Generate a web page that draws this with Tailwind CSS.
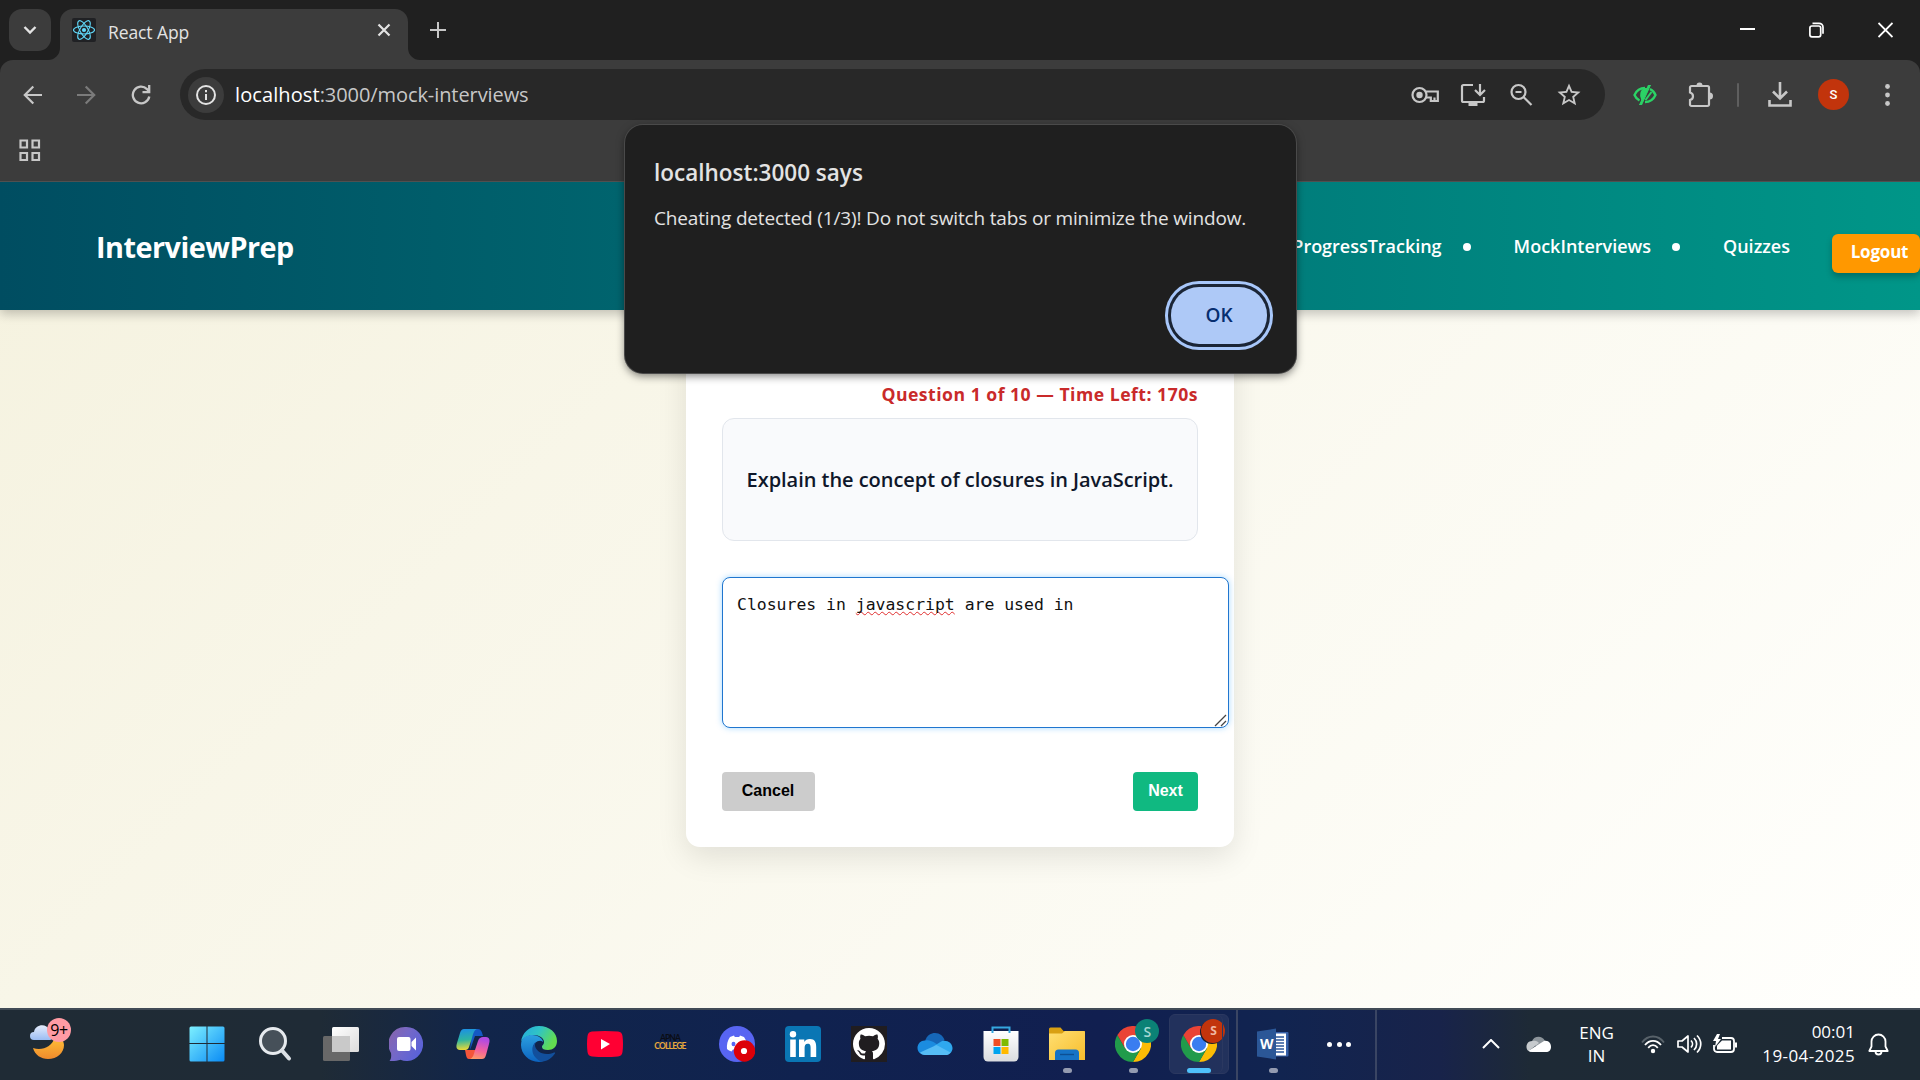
<!DOCTYPE html>
<html lang="en">
<head>
<meta charset="utf-8">
<title>React App</title>
<script src="https://cdn.jsdelivr.net/npm/@tailwindcss/browser@4"></script>
</head>
<body class="relative flex h-[1080px] w-[1920px] flex-col overflow-hidden bg-[#202020] font-['Open_Sans',sans-serif]">

<!-- Tab strip -->
<div class="flex h-[60px] shrink-0 items-end pl-[9px]">
  <button class="mb-[9px] flex h-[42px] w-[42px] items-center justify-center rounded-[13px] bg-[#3c3c3c]">
    <svg width="14" height="10" viewBox="0 0 14 10" fill="none" stroke="#e3e3e3" stroke-width="2.4"><path d="M1.5 2l5.500 5.500L12.500 2"/></svg>
  </button>
  <svg class="ml-[-3px]" width="12" height="12" viewBox="0 0 12 12"><path d="M12 0v12H0A12 12 0 0 0 12 0z" fill="#3c3c3c"/></svg>
  <div class="flex h-[51px] w-[348px] items-center rounded-t-[13px] bg-[#3c3c3c] pr-[17px] pb-[9px] pl-3">
    <svg width="24" height="24" viewBox="0 0 24 24" fill="none" stroke="#61dafb" stroke-width="1.100"><rect width="24" height="24" rx="2" fill="#202124" stroke="none"/><circle cx="12" cy="12" r="2.100" fill="#61dafb" stroke="none"/><ellipse cx="12" cy="12" rx="10.500" ry="4"/><ellipse cx="12" cy="12" rx="10.500" ry="4" transform="rotate(60 12 12)"/><ellipse cx="12" cy="12" rx="10.500" ry="4" transform="rotate(120 12 12)"/></svg>
    <span class="mt-[3px] ml-3 text-[17.5px] leading-6 tracking-[-0.1px] text-[#e3e3e3]">React App</span>
    <svg class="ml-auto" width="14" height="14" viewBox="0 0 14 14" stroke="#e3e3e3" stroke-width="2.200"><path d="M1.500 1.500l11 11M12.500 1.500l-11 11"/></svg>
  </div>
  <svg width="12" height="12" viewBox="0 0 12 12"><path d="M0 0v12h12A12 12 0 0 1 0 0z" fill="#3c3c3c"/></svg>
  <svg class="mb-[22px] ml-[10px]" width="16" height="16" viewBox="0 0 16 16" stroke="#c7c7c7" stroke-width="2"><path d="M8 0v16M0 8h16"/></svg>
  <div class="mb-[22px] ml-auto flex items-center gap-[54px] pr-[27px] text-white">
    <svg width="15" height="16" viewBox="0 0 15 16"><path d="M0 7h15" stroke="currentColor" stroke-width="2"/></svg>
    <svg width="15" height="16" viewBox="0 0 15 16" fill="none" stroke="currentColor" stroke-width="1.700"><rect x=".9" y="4" width="10.800" height="10.800" rx="2"/><path d="M3.500 1.300H10a4 4 0 0 1 4 4v6.500"/></svg>
    <svg width="15" height="16" viewBox="0 0 15 16" stroke="currentColor" stroke-width="1.800"><path d="M.5 1l14 14M14.500 1l-14 14"/></svg>
  </div>
</div>

<!-- Toolbar -->
<div class="shrink-0 rounded-t-[13px] bg-[#3c3c3c]">
  <div class="flex h-[69px] items-center">
    <div class="flex w-[180px] items-center gap-[33px] pl-[23px] text-[#c7c7c7]">
      <svg width="20" height="20" viewBox="0 0 20 20" fill="none" stroke="currentColor" stroke-width="2.200"><path d="M19 10H2.500M10.300 1.500L1.800 10l8.500 8.500"/></svg>
      <svg width="20" height="20" viewBox="0 0 20 20" fill="none" stroke="#7b7b7b" stroke-width="2.200"><path d="M1 10h16.500M9.700 1.500l8.500 8.500-8.500 8.500"/></svg>
      <svg class="ml-[2px]" width="20" height="20" viewBox="0 0 20 20" fill="none" stroke="currentColor" stroke-width="2.300"><path d="M18.300 11.500A8.300 8.300 0 1 1 16 4.100L18 6.500"/><path d="M18.200 0v7.200H11.500"/></svg>
    </div>
    <div class="flex h-[51px] w-[1425px] items-center rounded-full bg-[#282828] pr-3 pl-2 text-[#c7c7c7]">
      <span class="flex h-9 w-9 items-center justify-center rounded-full bg-[#3c3c3c]">
        <svg width="20" height="20" viewBox="0 0 20 20" fill="none" stroke="#e3e3e3" stroke-width="2"><circle cx="10" cy="10" r="9"/><path d="M10 9v6M10 5v2.200"/></svg>
      </span>
      <span class="ml-[11px] text-[20px] text-[#c7c7c7]"><span class="tracking-[0.1px] text-white">localhost</span><span class="tracking-[-0.08px]">:3000/mock-interviews</span></span>
      <div class="ml-auto grid grid-cols-[repeat(4,48px)] place-items-center">
        <svg width="28" height="18" viewBox="0 0 28 18" fill="none" stroke="currentColor" stroke-width="2.200"><circle cx="8.500" cy="9" r="7"/><circle cx="8.500" cy="9" r="3.200" fill="currentColor" stroke="none"/><path d="M15 5.500h11.800v9.500h-7v-3.500H15M23.500 15v-3.500"/></svg>
        <svg width="26" height="24" viewBox="0 0 26 24" fill="none" stroke="currentColor" stroke-width="2.200"><path d="M13 2H3.500A1.500 1.500 0 0 0 2 3.500v14A1.500 1.500 0 0 0 3.500 19h19a1.500 1.500 0 0 0 1.500-1.500V14M20 1v9.500M15 7l5 5 5-5"/><path d="M8.500 19h9v4h-9z" fill="currentColor" stroke="none"/></svg>
        <svg width="24" height="24" viewBox="0 0 24 24" fill="none" stroke="currentColor" stroke-width="2.200"><circle cx="9.500" cy="9" r="7"/><path d="M6.500 9h6M14.500 14l8 8"/></svg>
        <svg width="24" height="24" viewBox="0 0 24 24" fill="currentColor"><path d="M22 9.240l-7.190-.62L12 2 9.190 8.630 2 9.240l5.460 4.730L5.820 21 12 17.270 18.180 21l-1.630-7.030L22 9.240zM12 15.400l-3.760 2.270 1-4.280-3.320-2.880 4.380-.38L12 6.100l1.710 4.040 4.380.38-3.320 2.880 1 4.280L12 15.400z" transform="translate(-1.800 -1.800) scale(1.150)"/></svg>
      </div>
    </div>
    <div class="ml-[14px] flex items-center text-[#c7c7c7]">
      <svg class="mr-[13px] ml-[14px]" width="24" height="20" viewBox="0 0 24 20" fill="none" stroke="#2bd366" stroke-width="2.300"><path d="M6.500 15.500C4.500 14.500 2.500 12.500 1.500 10 3.500 5.500 7.500 3 12 3M17 4c2.500 1.300 4.500 3.300 5.500 6-2 4.500-6 7-10.500 7"/><path d="M15.500 0h2L8.500 20h-2z" fill="#2bd366" stroke-width="1"/><path d="M12 4C8 5 7 10 9 14L14 4z" fill="#2bd366" stroke-width="1.800"/><path d="M18.500 7L12.500 15" stroke-width="2"/></svg>
      <svg class="mr-[10px] ml-[16px]" width="28" height="28" viewBox="0 0 28 28" fill="none" stroke="currentColor" stroke-width="2.200"><path d="M5.500 5h16A1.500 1.500 0 0 1 23 6.500v17a1.500 1.500 0 0 1-1.500 1.500h-16A1.500 1.500 0 0 1 4 23.500V19c4-1 4-6.500 0-7.500v-5A1.500 1.500 0 0 1 5.500 5z"/><path d="M10.500 4.500a3 3 0 0 1 6 0zM23.500 11.500a3 3 0 0 1 0 7z" fill="currentColor" stroke="none"/></svg>
      <span class="ml-[13px] h-6 w-0.5 rounded bg-[#5f5f5f]"></span>
      <svg class="ml-[29px]" width="24" height="25" viewBox="0 0 24 25" fill="none" stroke="currentColor" stroke-width="2.600"><path d="M12 0v16M5 9.500l7 7 7-7M1.500 18v5.500h21V18"/></svg>
      <span class="ml-[26px] flex h-[31px] w-[31px] items-center justify-center rounded-full bg-[#c2340c] text-[15px] text-white"><span class="font-['Roboto',sans-serif] text-[13px] leading-none font-medium">S</span></span>
      <svg class="ml-[36px]" width="5" height="24" viewBox="0 0 5 24" fill="currentColor"><circle cx="2.500" cy="3.500" r="2.400"/><circle cx="2.500" cy="12" r="2.400"/><circle cx="2.500" cy="20.500" r="2.400"/></svg>
    </div>
  </div>
  <div class="flex h-[53px] items-start border-b border-[#505050] pt-[10px] pl-[19px]">
    <svg width="22" height="23" viewBox="0 0 22 23" fill="none" stroke="#c7c7c7" stroke-width="2.200"><path d="M1.500 1.500h6.500v7H1.500zM13.500 1.500H20v7h-6.500zM1.500 14H8v7H1.500zM13.500 14H20v7h-6.500z"/></svg>
  </div>
</div>

<!-- Page -->
<div class="flex h-[826px] shrink-0 flex-col overflow-hidden bg-linear-135 from-[#f5f2df] to-[#fffffd]">
  <header class="z-10 flex h-32 shrink-0 items-center justify-between bg-linear-to-r from-[#004d61] to-[#009688] pt-px pl-[96px] text-white shadow-[0_4px_10px_rgba(0,0,0,0.22)]">
    <span class="text-[28.8px] font-bold tracking-[-0.5px]">InterviewPrep</span>
    <nav class="flex items-center text-[18px] font-semibold">
      <span class="tracking-[-0.02px]">ProgressTracking</span>
      <span class="ml-[21px] h-2 w-2 rounded-full bg-white"></span>
      <span class="ml-[43px]">MockInterviews</span>
      <span class="ml-[21px] h-2 w-2 rounded-full bg-white"></span>
      <span class="ml-[43px]">Quizzes</span>
      <span class="mt-[14px] ml-[42px] flex h-[39px] w-[88px] justify-center rounded-md bg-[#ff9800] pt-[6px] pl-[7px] text-[17px] leading-6 font-bold tracking-[-0.2px] shadow-[0_4px_6px_rgba(0,0,0,0.25)]">Logout</span>
    </nav>
  </header>
  <main class="flex justify-center pt-[20px]">
    <section class="flex h-[517px] w-[548px] flex-col rounded-[14px] bg-white px-9 pt-[52px] shadow-[0_10px_30px_rgba(0,0,0,0.1)]">
      <p class="text-right text-[17.6px] leading-6 font-bold tracking-[0.5px] whitespace-nowrap text-[#c92a2a]">Question 1 of 10 — Time Left: 170s</p>
      <div class="mt-3 flex h-[123px] shrink-0 items-center justify-center rounded-xl border border-[#e2e6ec] bg-[#f9fafc] text-[20px] font-semibold tracking-[-0.04px] whitespace-nowrap text-[#0f172a]">Explain the concept of closures in JavaScript.</div>
      <div class="mt-9 flex h-[151px] w-[507px] shrink-0 items-end justify-between rounded-lg border border-[#2076cf] bg-white pl-[14px] shadow-[0_0_6px_rgba(0,150,255,0.35)]">
        <p class="self-start pt-[15px] font-['DejaVu_Sans_Mono',monospace] text-[16.45px] leading-6 text-[#111]">Closures in <span class="underline decoration-[#e02d2d] decoration-wavy decoration-1 underline-offset-1 [text-decoration-skip-ink:none]">javascript</span> are used in</p>
        <svg class="mr-px" width="13" height="13" viewBox="0 0 13 13" stroke="#444" stroke-width="1.300"><path d="M1 12L12 1M7 12l5-5"/></svg>
      </div>
      <div class="mt-11 flex justify-between font-['Liberation_Sans',sans-serif] text-[16px] leading-[37px] font-bold">
        <button class="h-[39px] w-[93px] rounded-[4px] bg-[#ccc] pr-px pb-0.5 text-black">Cancel</button>
        <button class="h-[39px] w-[65px] rounded-[4px] bg-[#10b981] pb-0.5 text-white">Next</button>
      </div>
    </section>
  </main>
</div>

<!-- Taskbar -->
<div class="flex h-[72px] shrink-0 border-t-2 border-[#414b56] bg-[linear-gradient(90deg,#1f2b35_0px,#1f2b36_320px,#11254a_480px,#10224f_800px,#111f50_1100px,#112450_1280px,#18234a_1440px,#1e2a36_1530px,#1e2a34_1920px)] text-white">
  <div class="flex w-[174px] items-start pt-[8px] pl-[29px]">
    <div class="relative h-[44px] w-[42px]">
      <svg width="42" height="44" viewBox="0 0 42 44"><defs><linearGradient id="moon" x2="0" y2="1"><stop stop-color="#ffc238"/><stop offset="1" stop-color="#f08a2c"/></linearGradient><linearGradient id="cl" x2="0" y2="1"><stop stop-color="#e4ecfb"/><stop offset="1" stop-color="#9bbcf3"/></linearGradient></defs><path d="M4 30c9 3 19-1 22-11 5-1 9 4 9 8 0 8-7 14-16 14-7 0-13-4-15-11z" fill="url(#moon)"/><path d="M5 22a4 4 0 0 1 0-8c1-8 13-9 15-2 8 0 7 10 0 10z" fill="url(#cl)"/></svg>
      <span class="absolute top-0 right-0 flex h-6 w-6 items-center justify-center rounded-full bg-[#ff9ba4] text-[16px] tracking-[-0.3px] text-black">9+</span>
    </div>
  </div>
  <div class="grid h-[68px] w-[1062px] shrink-0 grid-cols-[repeat(16,66.125px)] place-items-center">
    <!-- Start -->
    <svg width="36" height="36" viewBox="0 0 36 36"><defs><linearGradient id="st" x2="1" y2="1" gradientUnits="objectBoundingBox"><stop stop-color="#7df0ff"/><stop offset="1" stop-color="#0a8bf5"/></linearGradient></defs><path d="M2 .500h15.500v16.500H.500V2A1.500 1.500 0 0 1 2 .500zM18.500.500H34A1.500 1.500 0 0 1 35.500 2v15h-17zM.500 18h17v17.500H2A1.500 1.500 0 0 1 .500 34zM18.500 18h17v16a1.500 1.500 0 0 1-1.500 1.500H18.500z" fill="url(#st)"/></svg>
    <!-- Search -->
    <svg class="ml-[3px]" width="34" height="36" viewBox="0 0 34 36"><circle cx="15" cy="15" r="12.500" fill="#465059" stroke="#e6eaee" stroke-width="3"/><path d="M24 24.500l7 8" stroke="#dce1e6" stroke-width="4" stroke-linecap="round"/></svg>
    <!-- Task view -->
    <svg class="ml-1" width="36" height="34" viewBox="0 0 36 34"><defs><linearGradient id="tv" x2="1" y2="1"><stop stop-color="#fff"/><stop offset="1" stop-color="#dcdcdc"/></linearGradient></defs><rect y="9" width="27" height="25" rx="1.500" fill="#686868"/><rect x="9" width="27" height="25" rx="1.500" fill="url(#tv)"/><path d="M9 9h18v16H9z" fill="#c9c9c9"/></svg>
    <!-- Chat -->
    <svg class="ml-[2px]" width="34" height="36" viewBox="0 0 34 36"><defs><linearGradient id="ch" x2="1" y2=".6"><stop stop-color="#8a64a8"/><stop offset=".5" stop-color="#7468c8"/><stop offset="1" stop-color="#5a62d8"/></linearGradient></defs><path d="M17.500 1a16.500 17 0 1 1-6 32.800c-3 1-7 1.500-11 1.200 1.500-2 2-4 1.500-8A16.800 17 0 0 1 17.500 1z" fill="url(#ch)"/><rect x="8" y="11" width="13.500" height="14" rx="2" fill="#fff"/><path d="M22.500 16l4.500-4.500v13L22.500 20z" fill="#fff"/></svg>
    <!-- Copilot -->
    <svg class="ml-[2px]" width="34" height="32" viewBox="0 0 34 32"><defs><linearGradient id="c1" x2=".1" y2="1"><stop stop-color="#1b8ee8"/><stop offset=".55" stop-color="#2fb5a0"/><stop offset="1" stop-color="#e4d83a"/></linearGradient><linearGradient id="c2" x2="-.2" y2="1"><stop stop-color="#b34be0"/><stop offset=".5" stop-color="#f4629c"/><stop offset="1" stop-color="#ffa65a"/></linearGradient></defs><path d="M16 1h6c3 0 4 3 5 7h-8l-5 14z" fill="#1458c4"/><path d="M9 22h11l-2 9h-5c-3 0-3-5-4-9z" fill="#f4553a"/><path d="M8 1h13c-3 1-4 5-5 9l-3 9c-1 3-3 3-5 3H4c-4 0-4-4-3-7L4 5c1-3 2-4 4-4z" fill="url(#c1)"/><path d="M26 31H14c3-1 4-5 5-9l3-9c1-3 3-4 5-4h3c4 0 4 4 3 7l-3 11c-1 3-2 4-4 4z" fill="url(#c2)"/></svg>
    <!-- Edge -->
    <svg class="ml-[2px]" width="36" height="36" viewBox="0 0 36 36"><defs><linearGradient id="e1" x2="1" y2=".4"><stop stop-color="#23a9df"/><stop offset=".5" stop-color="#30c3c6"/><stop offset="1" stop-color="#62dd50"/></linearGradient><linearGradient id="e2" x2="0" y2="1"><stop stop-color="#2b9fe0"/><stop offset="1" stop-color="#0c63c0"/></linearGradient></defs><path d="M0 16C1 7 8 0 18 0c11 0 18 7 18 15 0 6-4 9-9 9-4 0-6-1-6-3s2-2 2-5c0-4-5-7-10-7C7 9 2 12 0 16z" fill="url(#e1)"/><path d="M0 19C0 11 7 9 11 9c7 0 11 4 11 7-3-3-10 0-10 7 0 5 4 10 10 12.500C10 38 0 29 0 19z" fill="url(#e2)"/><path d="M15 16c-6 4-5 16 6 19.700 6-.7 10-4 13-8.200.5-1-.3-1.300-1-1C23 31 14 25 14 19c0-1 .4-2 1-3z" fill="#124f9c"/></svg>
    <!-- YouTube -->
    <svg class="ml-[2px]" width="36" height="26" viewBox="0 0 36 26"><path d="M5 .500Q18-.500 31 .500q4 .300 4.500 4.500 1 8 0 16-.500 4-4.500 4.500-13 1-26 0-4-.500-4.500-4.500-1-8 0-16Q1 .800 5 .500z" fill="#ff0033"/><path d="M14 8l9 5-9 5.500z" fill="#fff"/></svg>
    <!-- Apna College -->
    <div class="mb-[3px] flex flex-col items-center font-['Lato',sans-serif] text-[8.5px] leading-[7.500px] font-bold tracking-[-0.9px]"><span class="text-[#0b0d14]">APNA</span><span class="tracking-[-0.8px] text-[#e8a93c]">COLLEGE</span></div>
    <!-- Discord -->
    <svg class="ml-[2px]" width="36" height="36" viewBox="0 0 36 36"><circle cx="18" cy="18" r="18" fill="#5865f2"/><path d="M11 11l4-1.500.8 1.500h4.400l.8-1.500L25 11c2.500 3.500 3.500 8 3 12-1.500 1.200-3 2-4.500 2.500L22 23.500h-8L12.500 25.500C11 25 9 24 8 23c-.5-4 .5-8.500 3-12z" fill="#fff"/><ellipse cx="14.500" cy="18" rx="2" ry="2.300" fill="#5865f2"/><circle cx="25.500" cy="25" r="10.700" fill="#dc0009"/><circle cx="25" cy="25" r="3.100" fill="#fff"/></svg>
    <!-- LinkedIn -->
    <svg class="ml-px" width="36" height="36" viewBox="0 0 36 36"><rect width="36" height="36" rx="4" fill="#0a76b4"/><circle cx="8" cy="8.200" r="3.200" fill="#fff"/><path d="M5.200 13.500h5.600V31H5.200zM14 13.500h5.300V16c1-1.700 2.800-3 5.600-3 5 0 6.300 3.300 6.300 8v10h-5.600v-9c0-2.300-.2-4.300-2.800-4.300s-3.200 2-3.200 4.300v9H14z" fill="#fff"/></svg>
    <!-- GitHub -->
    <svg class="ml-[2px]" width="36" height="36" viewBox="0 0 36 36"><path fill="#201d20" d="M0 0h36v36H0z"/><path transform="translate(2 2) scale(2)" fill="#fff" d="M8 0C3.580 0 0 3.580 0 8c0 3.540 2.290 6.530 5.470 7.590.4.070.55-.17.55-.38 0-.19-.01-.82-.01-1.490-2.010.37-2.530-.49-2.690-.94-.09-.23-.48-.94-.82-1.130-.28-.15-.68-.52-.01-.53.63-.01 1.080.58 1.230.82.72 1.210 1.870.87 2.330.66.07-.52.28-.87.51-1.070-1.780-.2-3.640-.89-3.640-3.950 0-.87.31-1.590.82-2.150-.08-.2-.36-1.020.08-2.120 0 0 .67-.21 2.200.82.64-.18 1.320-.27 2-.27s1.360.09 2 .27c1.530-1.040 2.200-.82 2.200-.82.44 1.100.16 1.920.08 2.120.51.56.82 1.270.82 2.150 0 3.070-1.870 3.750-3.650 3.950.29.25.54.73.54 1.480 0 1.070-.01 1.930-.01 2.200 0 .21.15.46.55.38A8.010 8.010 0 0 0 16 8c0-4.420-3.580-8-8-8z"/></svg>
    <!-- OneDrive -->
    <svg class="ml-[2px]" width="36" height="24" viewBox="0 0 36 24"><path d="M8 9C10 3 14 1 18 1c5 0 8 3 9.500 7L14 18z" fill="#1667b8"/><path d="M8 23c-4 0-7.500-3-7.500-7 0-5 4-8 8-7.500 3-1 6 .5 8 1.500l12 8-2 5z" fill="#1b8ce0"/><path d="M17 14l8-5c6-1 10 2 10.500 7 0 4-3 7-7 7z" fill="#2fa8ee"/><path d="M3 20.500L19.500 13 33.500 20.500C32 22.500 30.500 23 28.500 23H8c-2.300 0-4-1-5-2.500z" fill="#56bdf6"/></svg>
    <!-- Store -->
    <svg class="ml-px" width="36" height="36" viewBox="0 0 36 36"><defs><linearGradient id="ms" x2="0" y2="1"><stop stop-color="#fff"/><stop offset="1" stop-color="#dadcdf"/></linearGradient></defs><path d="M.500 5h35v26a4.500 4.500 0 0 1-4.500 4.500H5A4.500 4.500 0 0 1 .500 31z" fill="url(#ms)"/><path d="M9.500 7V1.500h17V7" fill="none" stroke="#35a7e0" stroke-width="2"/><path d="M10.500 13h7v7h-7z" fill="#f04e23"/><path d="M18.500 13h7v7h-7z" fill="#7fba00"/><path d="M10.500 21h7v7h-7z" fill="#00a4ef"/><path d="M18.500 21h7v7h-7z" fill="#ffb900"/></svg>
    <!-- Explorer -->
    <div class="relative h-[34px] w-9">
      <svg width="36" height="34" viewBox="0 0 36 34"><defs><linearGradient id="fx" x2="1" y2="1"><stop stop-color="#ffdf72"/><stop offset="1" stop-color="#f7bd2c"/></linearGradient></defs><path d="M0 2a1.500 1.500 0 0 1 1.500-1.500h10L14.500 4H36v8H0z" fill="#d9a013"/><path d="M0 6.500h13L16 4h18.500A1.500 1.500 0 0 1 36 5.500V33H0z" fill="url(#fx)"/><path d="M6 33V26a3.500 3.500 0 0 1 3.500-3.500h17A3.500 3.500 0 0 1 30 26v7z" fill="#1673c6"/><path d="M11 27.500h14" stroke="#0d4f93" stroke-width="1.400"/></svg>
      <span class="absolute top-[41px] left-[14px] h-[5px] w-[9px] rounded-full bg-[#949bb0]"></span>
    </div>
    <!-- Chrome, first profile -->
    <div class="relative ml-px h-9 w-9">
      <svg width="36" height="36" viewBox="0 0 36 36"><path d="M18 9h15.600A18 18 0 0 1 18 36l7.800-13.500z" fill="#fbbc05"/><path d="M2.400 9A18 18 0 0 0 18 36l7.800-13.500H10.200z" fill="#219b4b"/><path d="M18 9h15.600A18 18 0 0 0 2.400 9l7.800 13.500z" fill="#ea4335"/><circle cx="18" cy="18" r="9" fill="#fff"/><circle cx="18" cy="18" r="7.200" fill="#3a7df0"/></svg>
      <span class="absolute top-[-7px] left-[20px] flex h-6 w-6 items-center justify-center rounded-full bg-[#0b8276] text-[14px] font-semibold text-[#a4d8d2]">S</span>
      <span class="absolute top-[42px] left-[14px] h-[5px] w-[9px] rounded-full bg-[#949bb0]"></span>
    </div>
    <!-- Chrome, active profile -->
    <div class="relative ml-px flex h-[60px] w-[60px] items-center justify-center rounded-md border border-[#2b3860] bg-white/7">
      <div class="relative h-9 w-9">
        <svg width="36" height="36" viewBox="0 0 36 36"><path d="M18 9h15.600A18 18 0 0 1 18 36l7.800-13.500z" fill="#fbbc05"/><path d="M2.400 9A18 18 0 0 0 18 36l7.800-13.500H10.200z" fill="#219b4b"/><path d="M18 9h15.600A18 18 0 0 0 2.400 9l7.800 13.500z" fill="#ea4335"/><circle cx="18" cy="18" r="9" fill="#fff"/><circle cx="18" cy="18" r="7.200" fill="#3a7df0"/></svg>
        <span class="absolute top-[-7px] left-[20px] flex h-6 w-6 items-center justify-center rounded-full bg-[#c2340c] text-[12px] font-bold text-[#f0b8a4] shadow-[-1px_1px_0_#191d2c]">S</span>
        <span class="absolute top-[42px] left-[6px] h-[5px] w-6 rounded-full bg-[#4fc1fb]"></span>
      </div>
      <span class="absolute inset-y-0 right-[5px] w-2 rounded-r-md border-r border-[#2b3860]"></span>
    </div>
  </div>
  <div class="flex h-full w-[141px] shrink-0 items-center border-x-2 border-[#3a4563] pb-0.5">
    <div class="relative ml-[19px] h-8 w-8">
      <svg width="32" height="32" viewBox="0 0 32 32"><rect x="14" y="4" width="17.500" height="24.500" rx="1" fill="#3660a8"/><path d="M17 5.500h12v22H17z" fill="#fff"/><path d="M19 9h8M19 12h8M19 15h8M19 18h8M19 21h8M19 24h8" stroke="#2b579a" stroke-width="1.300"/><path d="M0 3.500L19 .500v31L0 28.500z" fill="#2b5797"/></svg>
      <span class="absolute top-[8px] left-[3px] text-[14px] leading-4 font-bold text-white">W</span>
      <span class="absolute top-[40px] left-[12px] h-[5px] w-[9px] rounded-full bg-[#949bb0]"></span>
    </div>
    <div class="ml-[38px] flex gap-[4.5px]"><span class="h-[5px] w-[5px] rounded-full bg-white"></span><span class="h-[5px] w-[5px] rounded-full bg-white"></span><span class="h-[5px] w-[5px] rounded-full bg-white"></span></div>
  </div>
  <!-- System tray -->
  <div class="ml-auto flex h-[68px] items-center pr-[31px]">
    <svg width="18" height="10" viewBox="0 0 18 10" fill="none" stroke="currentColor" stroke-width="2"><path d="M1 9l8-8 8 8"/></svg>
    <svg class="ml-[26px]" width="26" height="16" viewBox="0 0 26 16"><path d="M6 5C8 0 16-1 19 5l-8 6z" fill="#8d959b"/><path d="M6 16c-8 0-7-12 1-11 3-1 5 1 6 2l-9 7z" fill="#c6cacd"/><path d="M3 14.500L18 5c5-1 7 3 7 6 0 3-2 5-5 5H6c-1 0-2-.5-3-1.500z" fill="#fff"/></svg>
    <div class="ml-[27px] flex w-[35px] flex-col items-center text-[17px] leading-[23px] tracking-[-0.1px]"><span>ENG</span><span>IN</span></div>
    <svg class="ml-[27px]" width="24" height="20" viewBox="0 0 24 20" fill="none" stroke="currentColor" stroke-width="1.800"><path d="M1 8.500C7 .500 17 .500 23 8.500" stroke="#58626a"/><path d="M4 11c4.500-5.500 11.500-5.500 16 0M7.200 13.800c3-3.500 6.600-3.500 9.600 0"/><circle cx="12" cy="17" r="2.200" fill="currentColor" stroke="none"/></svg>
    <svg class="ml-[12px]" width="25" height="20" viewBox="0 0 25 20" fill="none" stroke="currentColor" stroke-width="1.700" stroke-linejoin="round"><path d="M1 7h4l6-5v16l-6-5H1zM14 6.500c2 2 2 5 0 7M17 4c3.500 3.500 3.500 8.500 0 12M20 1.500c5 5 5 12 0 17"/></svg>
    <svg class="ml-[11px]" width="25" height="20" viewBox="0 0 25 20" fill="none" stroke="currentColor" stroke-width="1.800"><path d="M9 4h9a3 3 0 0 1 3 3v8a3 3 0 0 1-3 3H4a3 3 0 0 1-3-3v-4"/><path d="M9 6.500h9v9H4v-4z" fill="currentColor" stroke="none"/><path d="M22 8.500h2v5h-2z" fill="currentColor" stroke="none"/><path d="M4 0L0 7h3l-1 6 6-8H5l2-5z" fill="currentColor" stroke="none"/></svg>
    <div class="ml-[24px] flex w-[93px] flex-col items-end text-[17px] leading-[24px]"><span>00:01</span><span class="tracking-[0.4px]">19-04-2025</span></div>
    <svg class="ml-[13px]" width="21" height="23" viewBox="0 0 21 23" fill="none" stroke="currentColor" stroke-width="1.800" stroke-linejoin="round"><path d="M10.500 1.500a7 7 0 0 0-7 7v5L1.300 18h18.400l-2.200-4.500v-5a7 7 0 0 0-7-7zM7.500 18.500a3 3 0 0 0 6 0"/></svg>
  </div>
</div>

<!-- Alert dialog -->
<div class="absolute top-[125px] left-[625px] z-20 flex h-[248px] w-[671px] flex-col rounded-[18px] bg-[#1f1f1f] pt-8 pr-[29px] pl-[29px] text-[#e3e3e3] shadow-[0_0_0_1px_#4a4a4a,0_3px_8px_rgba(0,0,0,0.5)]">
  <h1 class="text-[22.5px] leading-8 font-semibold">localhost:3000 says</h1>
  <p class="mt-[15px] text-[19px] leading-7 tracking-[-0.16px] whitespace-nowrap">Cheating detected (1/3)! Do not switch tabs or minimize the window.</p>
  <button class="mt-[55px] h-[57px] w-[96px] self-end rounded-[28px] bg-[#aec9f7] text-[19px] font-semibold text-[#062e6f] shadow-[0_0_0_3px_#1b2536,0_0_0_6px_#a8c7fa]">OK</button>
</div>
</body>
</html>
